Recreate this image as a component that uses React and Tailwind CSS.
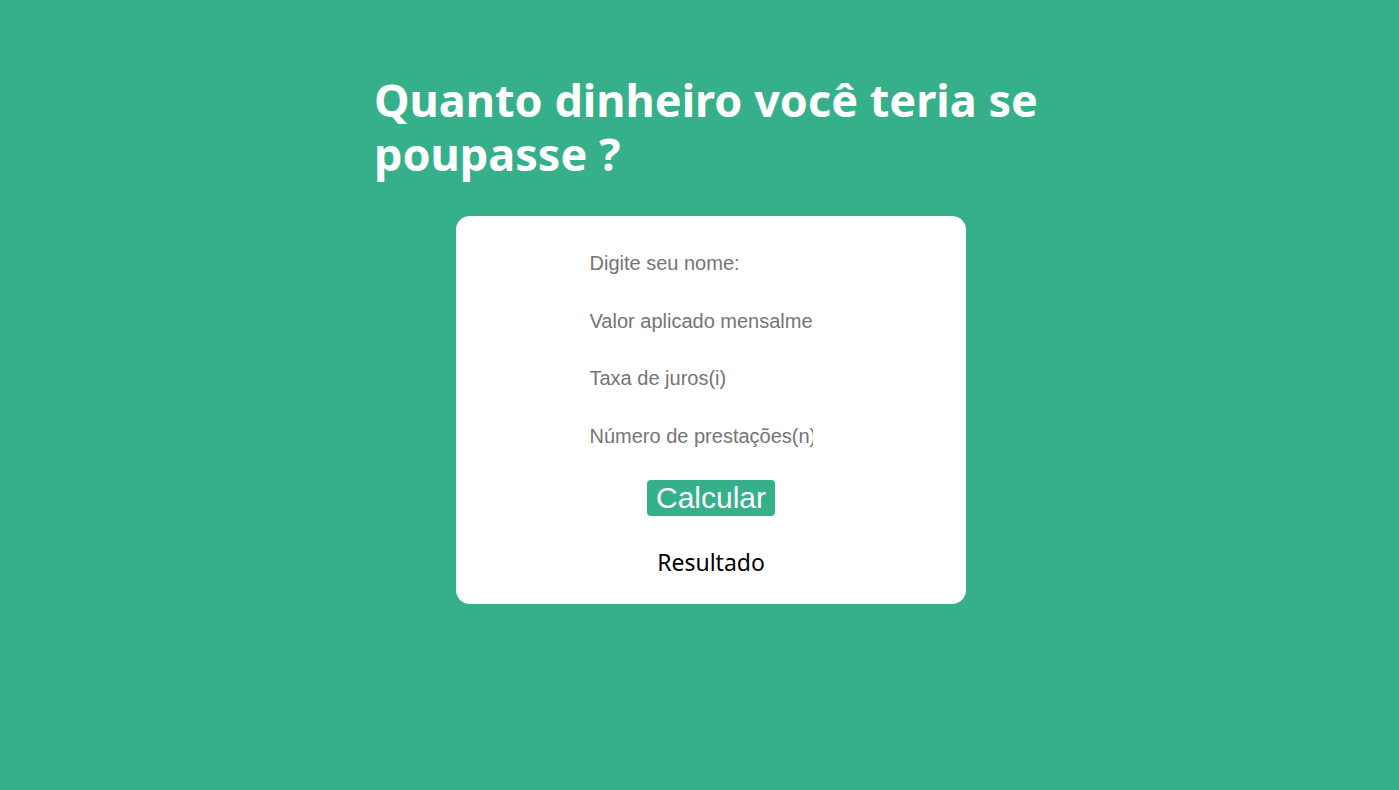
import React from 'react';

const fields = [
  'Digite seu nome:',
  'Valor aplicado mensalmente',
  'Taxa de juros(i)',
  'Número de prestações(n)',
];

export default function App() {
  return (
    <div className="min-h-[790px] bg-[#36b08a] pl-[23px] pt-[73px]" style={{ fontFamily: "'Noto Sans', sans-serif" }}>
      <div className="mx-auto w-[674px]">
        <h1 className="text-[45px] font-bold leading-[54px] text-white">
          Quanto dinheiro você teria se poupasse ?
        </h1>
      </div>
      <div className="mx-auto mt-[35px] flex w-[510px] flex-col items-center rounded-[14px] bg-white pt-[31px] pb-[27px]">
        <div className="flex flex-col gap-[24.5px] pr-[20px]">
          {fields.map((f) => (
            <input
              key={f}
              type="text"
              placeholder={f}
              className="h-[33px] w-[227px] border-0 px-[2px] text-[20px] text-black outline-none placeholder:text-[#757575]"
              style={{ fontFamily: "'Liberation Sans', Arial, sans-serif" }}
            />
          ))}
        </div>
        <button
          className="mt-[27px] h-[36px] rounded-[4px] bg-[#36b08a] px-[9px] text-[30px] leading-[36px] text-white"
          style={{ fontFamily: "'Liberation Sans', Arial, sans-serif" }}
        >
          Calcular
        </button>
        <p className="mt-[31px] text-[23px] leading-[30px] text-black">Resultado</p>
      </div>
    </div>
  );
}
